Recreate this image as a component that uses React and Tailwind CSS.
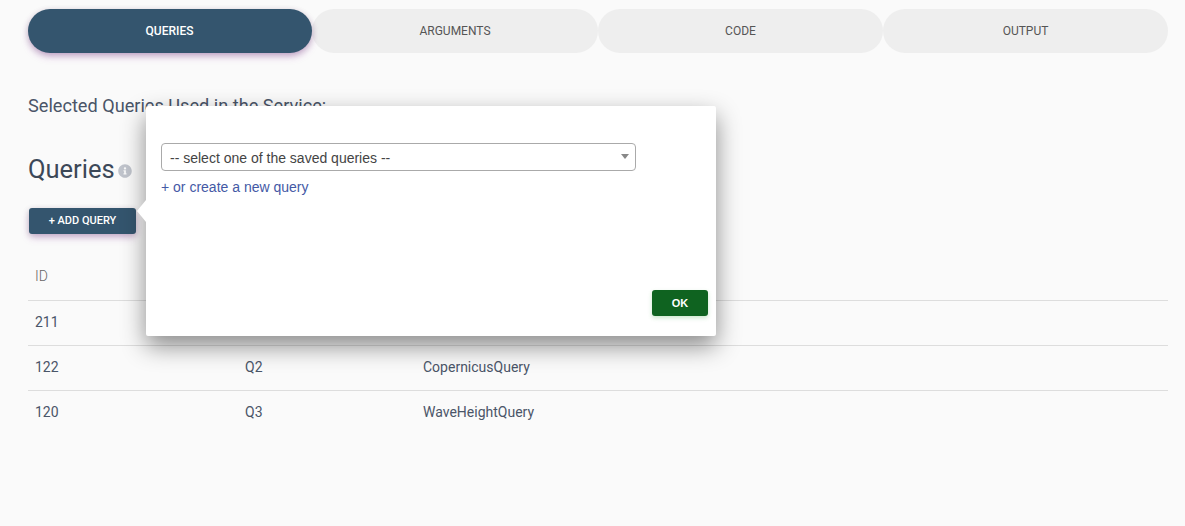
import React, { useState } from "react";

const tabs = [
  { label: "QUERIES", width: "w-[284px]" },
  { label: "ARGUMENTS", width: "w-[286px]" },
  { label: "CODE", width: "w-[285px]" },
  { label: "OUTPUT", width: "w-[285px]" },
];

const rows = [
  { id: 211, code: "Q1", name: "" },
  { id: 122, code: "Q2", name: "CopernicusQuery" },
  { id: 120, code: "Q3", name: "WaveHeightQuery" },
];

function InfoIcon() {
  return (
    <svg viewBox="0 0 512 512" className="ml-[3px] mt-[4px] h-[14px] w-[14px] fill-[#c0c4cc]">
      <path d="M256 8C119 8 8 119 8 256s111 248 248 248 248-111 248-248S393 8 256 8zm0 110c23 0 42 19 42 42s-19 42-42 42-42-19-42-42 19-42 42-42zm56 254c0 7-5 12-12 12h-88c-7 0-12-5-12-12v-24c0-7 5-12 12-12h12v-64h-12c-7 0-12-5-12-12v-24c0-7 5-12 12-12h64c7 0 12 5 12 12v100h12c7 0 12 5 12 12v24z" />
    </svg>
  );
}

export default function App() {
  const [active] = useState(0);

  return (
    <div className="relative h-[526px] w-full overflow-hidden bg-[#fafafa] font-['Roboto',sans-serif] text-[#4a5568]">
      <div className="mx-[28px] w-[1140px] pt-[9px]">
        <div className="flex">
          {tabs.map((t, i) => (
            <button
              key={t.label}
              className={
                i === active
                  ? "relative z-10 flex h-[44px] w-[284px] items-center justify-center rounded-[22px] bg-[#34556e] pr-px text-[12px] font-medium text-white shadow-[0_4px_8px_-1px_rgba(156,39,176,0.28),0_2px_6px_rgba(0,0,0,0.2)]"
                  : `flex h-[44px] ${t.width} items-center justify-center rounded-[22px] bg-[#eeeeee] text-[12px] text-[#555555]`
              }
            >
              {t.label}
            </button>
          ))}
        </div>

        <p className="mt-[42px] text-[18.15px] leading-[22px]">Selected Queries Used in the Service:</p>

        <div className="mt-[36px] flex items-center text-[#3c4858]">
          <h3 className="text-[25.5px] leading-[32px]">Queries</h3>
          <InfoIcon />
        </div>

        <button className="ml-px mt-[23px] block h-[26px] w-[107px] rounded-[3px] bg-[#34556e] text-[11px] font-medium text-white shadow-[0_4px_8px_-1px_rgba(156,39,176,0.25),0_2px_6px_rgba(0,0,0,0.2)]">
          + ADD QUERY
        </button>

        <div className="mt-[20px]">
          <div className="flex h-[47px] items-center border-b border-[#dddddd] pb-[2px] pl-[7px] text-[14px] font-light text-[#666666]">
            ID
          </div>
          {rows.map((r) => (
            <div key={r.id} className="flex h-[45px] items-center border-b border-[#dddddd] pb-[2px] text-[14px] last:border-b-0 last:pb-[3px]">
              <div className="w-[217px] pl-[7px]">{r.id}</div>
              <div className="w-[178px]">{r.code}</div>
              <div>{r.name}</div>
            </div>
          ))}
        </div>
      </div>

      <div className="absolute left-[146px] top-[106px] flex h-[230px] w-[570px] flex-col rounded-[2px] bg-white px-[15px] pt-[37px] font-['Liberation_Sans',sans-serif] shadow-[0_10px_24px_rgba(0,0,0,0.45)]">
        <div className="absolute left-[-9px] top-[94px] h-0 w-0 border-y-[11px] border-r-[9px] border-y-transparent border-r-white" />
        <div className="flex h-[28px] w-[475px] items-center justify-between rounded-[4px] border border-[#aaaaaa] bg-white pl-[8px] pr-[6px] text-[14px] leading-[28px] text-[#444444]">
          <span className="mt-[2px]">-- select one of the saved queries --</span>
          <span className="mb-px h-0 w-0 border-x-[4px] border-t-[5px] border-x-transparent border-t-[#888888]" />
        </div>
        <a className="mt-[8px] text-[14px] leading-[16px] text-[#4459a5]">+ or create a new query</a>
        <button className="mb-[20px] mr-[-7px] mt-auto h-[26px] w-[56px] self-end rounded-[3px] bg-[#0f6320] text-[11px] font-bold text-white shadow-[0_2px_4px_rgba(76,175,80,0.3)]">
          OK
        </button>
      </div>
    </div>
  );
}
